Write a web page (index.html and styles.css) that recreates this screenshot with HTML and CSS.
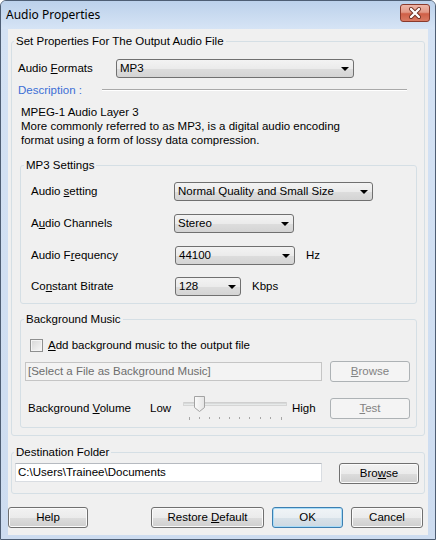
FILE: index.html
```html
<!DOCTYPE html>
<html>
<head>
<meta charset="utf-8">
<title>Audio Properties</title>
<link rel="stylesheet" href="styles.css">
</head>
<body>
<div class="window">
  <div class="titlebar">
    <span class="title">Audio Properties</span>
    <span class="close">
      <svg width="30" height="18" viewBox="0 0 30 18">
        <path d="M11 5 L19 13 M19 5 L11 13" stroke="#6a2a1c" stroke-width="4" stroke-linecap="round"/>
        <path d="M11 5 L19 13 M19 5 L11 13" stroke="#ffffff" stroke-width="2.4" stroke-linecap="round"/>
      </svg>
    </span>
  </div>
  <div class="client">
    <div class="group g-main">
      <div class="gtitle t-main">Set Properties For The Output Audio File</div>
      <div class="row r-format">
        <span class="lbl w-format">Audio <u>F</u>ormats</span>
        <div class="combo c-format"><span class="ctext">MP3</span><span class="arrow"></span></div>
      </div>
      <div class="desc-head">
        <span class="desc-label">Description :</span>
        <span class="desc-line"></span>
      </div>
      <div class="desc-text">MPEG-1 Audio Layer 3<br>More commonly referred to as MP3, is a digital audio encoding<br>format using a form of lossy data compression.</div>

      <div class="group g-mp3">
        <div class="gtitle t-mp3">MP3 Settings</div>
        <div class="row r-mp3 first">
          <span class="lbl w-mp3">Audio <u>s</u>etting</span>
          <div class="combo c-setting"><span class="ctext">Normal Quality and Small Size</span><span class="arrow"></span></div>
        </div>
        <div class="row r-mp3">
          <span class="lbl w-mp3">A<u>u</u>dio Channels</span>
          <div class="combo c-channels"><span class="ctext">Stereo</span><span class="arrow"></span></div>
        </div>
        <div class="row r-mp3">
          <span class="lbl w-mp3">Audio F<u>r</u>equency</span>
          <div class="combo c-freq"><span class="ctext">44100</span><span class="arrow"></span></div>
          <span class="unit">Hz</span>
        </div>
        <div class="row r-mp3 last">
          <span class="lbl w-mp3">Co<u>n</u>stant Bitrate</span>
          <div class="combo c-bitrate"><span class="ctext">128</span><span class="arrow"></span></div>
          <span class="unit">Kbps</span>
        </div>
      </div>

      <div class="group g-bg">
        <div class="gtitle t-bg">Background Music</div>
        <div class="row r-check">
          <span class="checkbox"></span>
          <span class="check-label"><u>A</u>dd background music to the output file</span>
        </div>
        <div class="row r-file">
          <div class="field disabled f-bg">[Select a File as Background Music]</div>
          <div class="btn disabled b-browse"><span><u>B</u>rowse</span></div>
        </div>
        <div class="row r-volume">
          <span class="lbl w-volume">Background <u>V</u>olume</span>
          <span class="lbl w-low">Low</span>
          <svg class="slider" width="110" height="28" viewBox="0 0 110 28">
            <rect x="3.5" y="8.5" width="103" height="3" fill="#e7eaea" stroke="#d6d6d6"/>
            <line x1="4" y1="9" x2="106" y2="9" stroke="#c9c9c9"/>
            <g stroke="#a6a6a6" stroke-width="1">
              <line x1="9.5" y1="23" x2="9.5" y2="26"/>
              <line x1="19.5" y1="23" x2="19.5" y2="25"/>
              <line x1="29.5" y1="23" x2="29.5" y2="25"/>
              <line x1="39.5" y1="23" x2="39.5" y2="25"/>
              <line x1="49.5" y1="23" x2="49.5" y2="25"/>
              <line x1="59.5" y1="23" x2="59.5" y2="25"/>
              <line x1="69.5" y1="23" x2="69.5" y2="25"/>
              <line x1="80.5" y1="23" x2="80.5" y2="25"/>
              <line x1="90.5" y1="23" x2="90.5" y2="25"/>
              <line x1="101.5" y1="23" x2="101.5" y2="26"/>
            </g>
            <defs>
              <linearGradient id="thumb" x1="0" y1="0" x2="1" y2="0">
                <stop offset="0" stop-color="#fbfbfb"/>
                <stop offset="1" stop-color="#e4e4e4"/>
              </linearGradient>
            </defs>
            <path d="M14.5 2.5 H24.5 V13.5 L19.5 17.5 L14.5 13.5 Z" fill="url(#thumb)" stroke="#a3a3a3"/>
          </svg>
          <span class="lbl w-high">High</span>
          <div class="btn disabled b-test"><span><u>T</u>est</span></div>
        </div>
      </div>
    </div>

    <div class="group g-dest">
      <div class="gtitle t-dest">Destination Folder</div>
      <div class="row r-dest">
        <div class="field f-dest">C:\Users\Trainee\Documents</div>
        <div class="btn b-dbrowse"><span>Bro<u>w</u>se</span></div>
      </div>
    </div>

    <div class="buttons">
      <div class="btn b-help"><span>Help</span></div>
      <div class="btn b-restore"><span>Restore <u>D</u>efault</span></div>
      <div class="btn b-ok default"><span>OK</span></div>
      <div class="btn b-cancel"><span>Cancel</span></div>
    </div>
  </div>
</div>
</body>
</html>
```

FILE: styles.css
```css
html, body {
  margin: 0;
  padding: 0;
  background: #ffffff;
}

body {
  font-family: "Liberation Sans", Arial, sans-serif;
  font-size: 11.5px;
  line-height: 13px;
  color: #000000;
}

u {
  text-decoration: underline;
  text-underline-offset: 1px;
}

.window {
  width: 436px;
  height: 540px;
  box-sizing: border-box;
  border: 1px solid #4e5e74;
  border-radius: 6px 6px 0 0;
  background: linear-gradient(#c0d4ec 0px, #d4e2f4 28px, #cddcf0 100%);
  display: flex;
  flex-direction: column;
  overflow: hidden;
}

.titlebar {
  height: 28px;
  flex: 0 0 28px;
  display: flex;
  align-items: flex-start;
  background: linear-gradient(#bcd1eb, #d6e4f5);
}

.title {
  font-family: "Noto Sans", "Open Sans", sans-serif;
  font-size: 12px;
  line-height: 16px;
  margin: 6px 0 0 5px;
  color: #000;
  flex: 1;
}

.close {
  width: 30px;
  height: 18px;
  margin: 3px 5px 0 0;
  box-sizing: border-box;
  border: 1px solid #8a3a2c;
  border-radius: 3px;
  background: linear-gradient(#eeb6a8 0%, #e29886 45%, #cf5f47 55%, #d97a62 100%);
  display: flex;
  align-items: center;
  justify-content: center;
  overflow: hidden;
}

.close svg {
  display: block;
  margin: -1px;
}

.client {
  width: 420px;
  height: 506px;
  margin-left: 7px;
  background: #f0f0f0;
  display: flex;
  flex-direction: column;
}

/* group boxes */
.group {
  border: 1px solid #d5dfe5;
  border-radius: 3px;
  box-sizing: border-box;
}

.gtitle {
  width: fit-content;
  margin-top: -7px;
  padding: 0 2px;
  background: #f0f0f0;
  line-height: 13px;
  white-space: nowrap;
}

.g-main {
  margin: 12px 0 0 3px;
  width: 414px;
  padding: 0 0 7px 6px;
}
.t-main { margin-left: -4px; }

.g-mp3 {
  margin: 18px 0 0 2px;
  width: 397px;
  padding: 0 0 7px 10px;
}
.t-mp3 { margin-left: -7px; }

.g-bg {
  margin: 15px 0 0 2px;
  width: 397px;
  padding: 0 0 8px 4px;
}
.t-bg { margin-left: -1px; }

.g-dest {
  margin: 16px 0 0 3px;
  width: 414px;
  padding: 0 0 9px 3px;
}
.t-dest { margin-left: -1px; }

/* rows */
.row {
  display: flex;
  align-items: center;
}

.lbl {
  white-space: nowrap;
  flex: 0 0 auto;
}

.r-format { margin-top: 11px; }
.w-format { width: 98px; }

.desc-head {
  display: flex;
  align-items: center;
  margin-top: 6px;
  height: 13px;
}
.desc-label {
  width: 84px;
  color: #3c6fd6;
}
.desc-line {
  width: 305px;
  height: 1px;
  background: #a9a9a9;
  border-bottom: 1px solid #ffffff;
  margin-top: -1px;
}

.desc-text {
  margin: 8px 0 0 3px;
  line-height: 14px;
}

.r-mp3 { margin-top: 13px; }
.r-mp3.first { margin-top: 10px; }
.r-mp3.last { margin-top: 12px; }
.w-mp3 { width: 143px; }

.unit { margin-left: 11px; }

/* combo boxes */
.combo {
  height: 19px;
  box-sizing: border-box;
  border: 1px solid #707070;
  border-radius: 3px;
  background: linear-gradient(#f3f3f3 0%, #ebebeb 50%, #dddddd 51%, #d4d4d4 100%);
  display: flex;
  align-items: center;
  padding-left: 3px;
  flex: 0 0 auto;
}
.ctext {
  flex: 1;
  white-space: nowrap;
}
.arrow {
  width: 0;
  height: 0;
  border-left: 4px solid transparent;
  border-right: 4px solid transparent;
  border-top: 4px solid #000;
  margin-right: 4px;
}
.c-format { width: 238px; }
.c-setting { width: 199px; }
.c-channels { width: 120px; }
.c-freq { width: 120px; margin-left: 1px; }
.c-bitrate { width: 66px; margin-left: 1px; }

/* checkbox */
.r-check { margin: 13px 0 0 5px; }
.checkbox {
  width: 13px;
  height: 13px;
  box-sizing: border-box;
  border: 1px solid #8e8f8f;
  background: linear-gradient(135deg, #d6d6d6, #f7f7f7);
  box-shadow: inset 0 0 0 1px #f4f4f4;
}
.check-label { margin-left: 5px; }

/* fields */
.field {
  height: 19px;
  box-sizing: border-box;
  border: 1px solid #d9dde2;
  border-top-color: #b6bac0;
  background: #ffffff;
  padding: 2px 0 0 2px;
  white-space: nowrap;
}
.field.disabled {
  background: #f3f3f3;
  border-color: #c5c5c5;
  color: #6d6d6d;
}

.r-file { margin-top: 9px; }
.f-bg { width: 297px; }

/* buttons */
.btn {
  height: 21px;
  box-sizing: border-box;
  border: 1px solid #707070;
  border-radius: 3px;
  background: linear-gradient(#f2f2f2 0%, #ebebeb 50%, #dddddd 51%, #cfcfcf 100%);
  box-shadow: inset 0 0 0 1px #fbfbfb;
  display: flex;
  align-items: center;
  justify-content: center;
  white-space: nowrap;
  flex: 0 0 auto;
}
.btn.disabled {
  border-color: #adb2b5;
  background: #f4f4f4;
  box-shadow: none;
  color: #838383;
}
.btn.default {
  border-color: #3c7fb1;
  box-shadow: inset 0 0 0 1px #a8dcf8;
  background: linear-gradient(#f0f4f7 0%, #e8eef2 50%, #d8e2e9 51%, #cdd9e2 100%);
}

.b-browse { width: 80px; margin-left: 8px; }

.r-volume { margin-top: 16px; }
.w-volume { width: 122px; margin-left: 3px; }
.w-low { width: 30px; }
.slider { display: block; margin: -4px 0 -3px 0; }
.w-high { width: 38px; margin-left: 2px; }
.b-test { width: 80px; }

.r-dest {
  margin-top: 4px;
  align-items: flex-start;
}
.f-dest { width: 307px; }
.b-dbrowse { width: 80px; margin-left: 17px; }

.buttons {
  display: flex;
  margin-top: 13px;
}
.b-help { width: 80px; }
.b-restore { width: 113px; margin-left: 63px; }
.b-ok { width: 71px; margin-left: 8px; }
.b-cancel { width: 72px; margin-left: 8px; }
```
